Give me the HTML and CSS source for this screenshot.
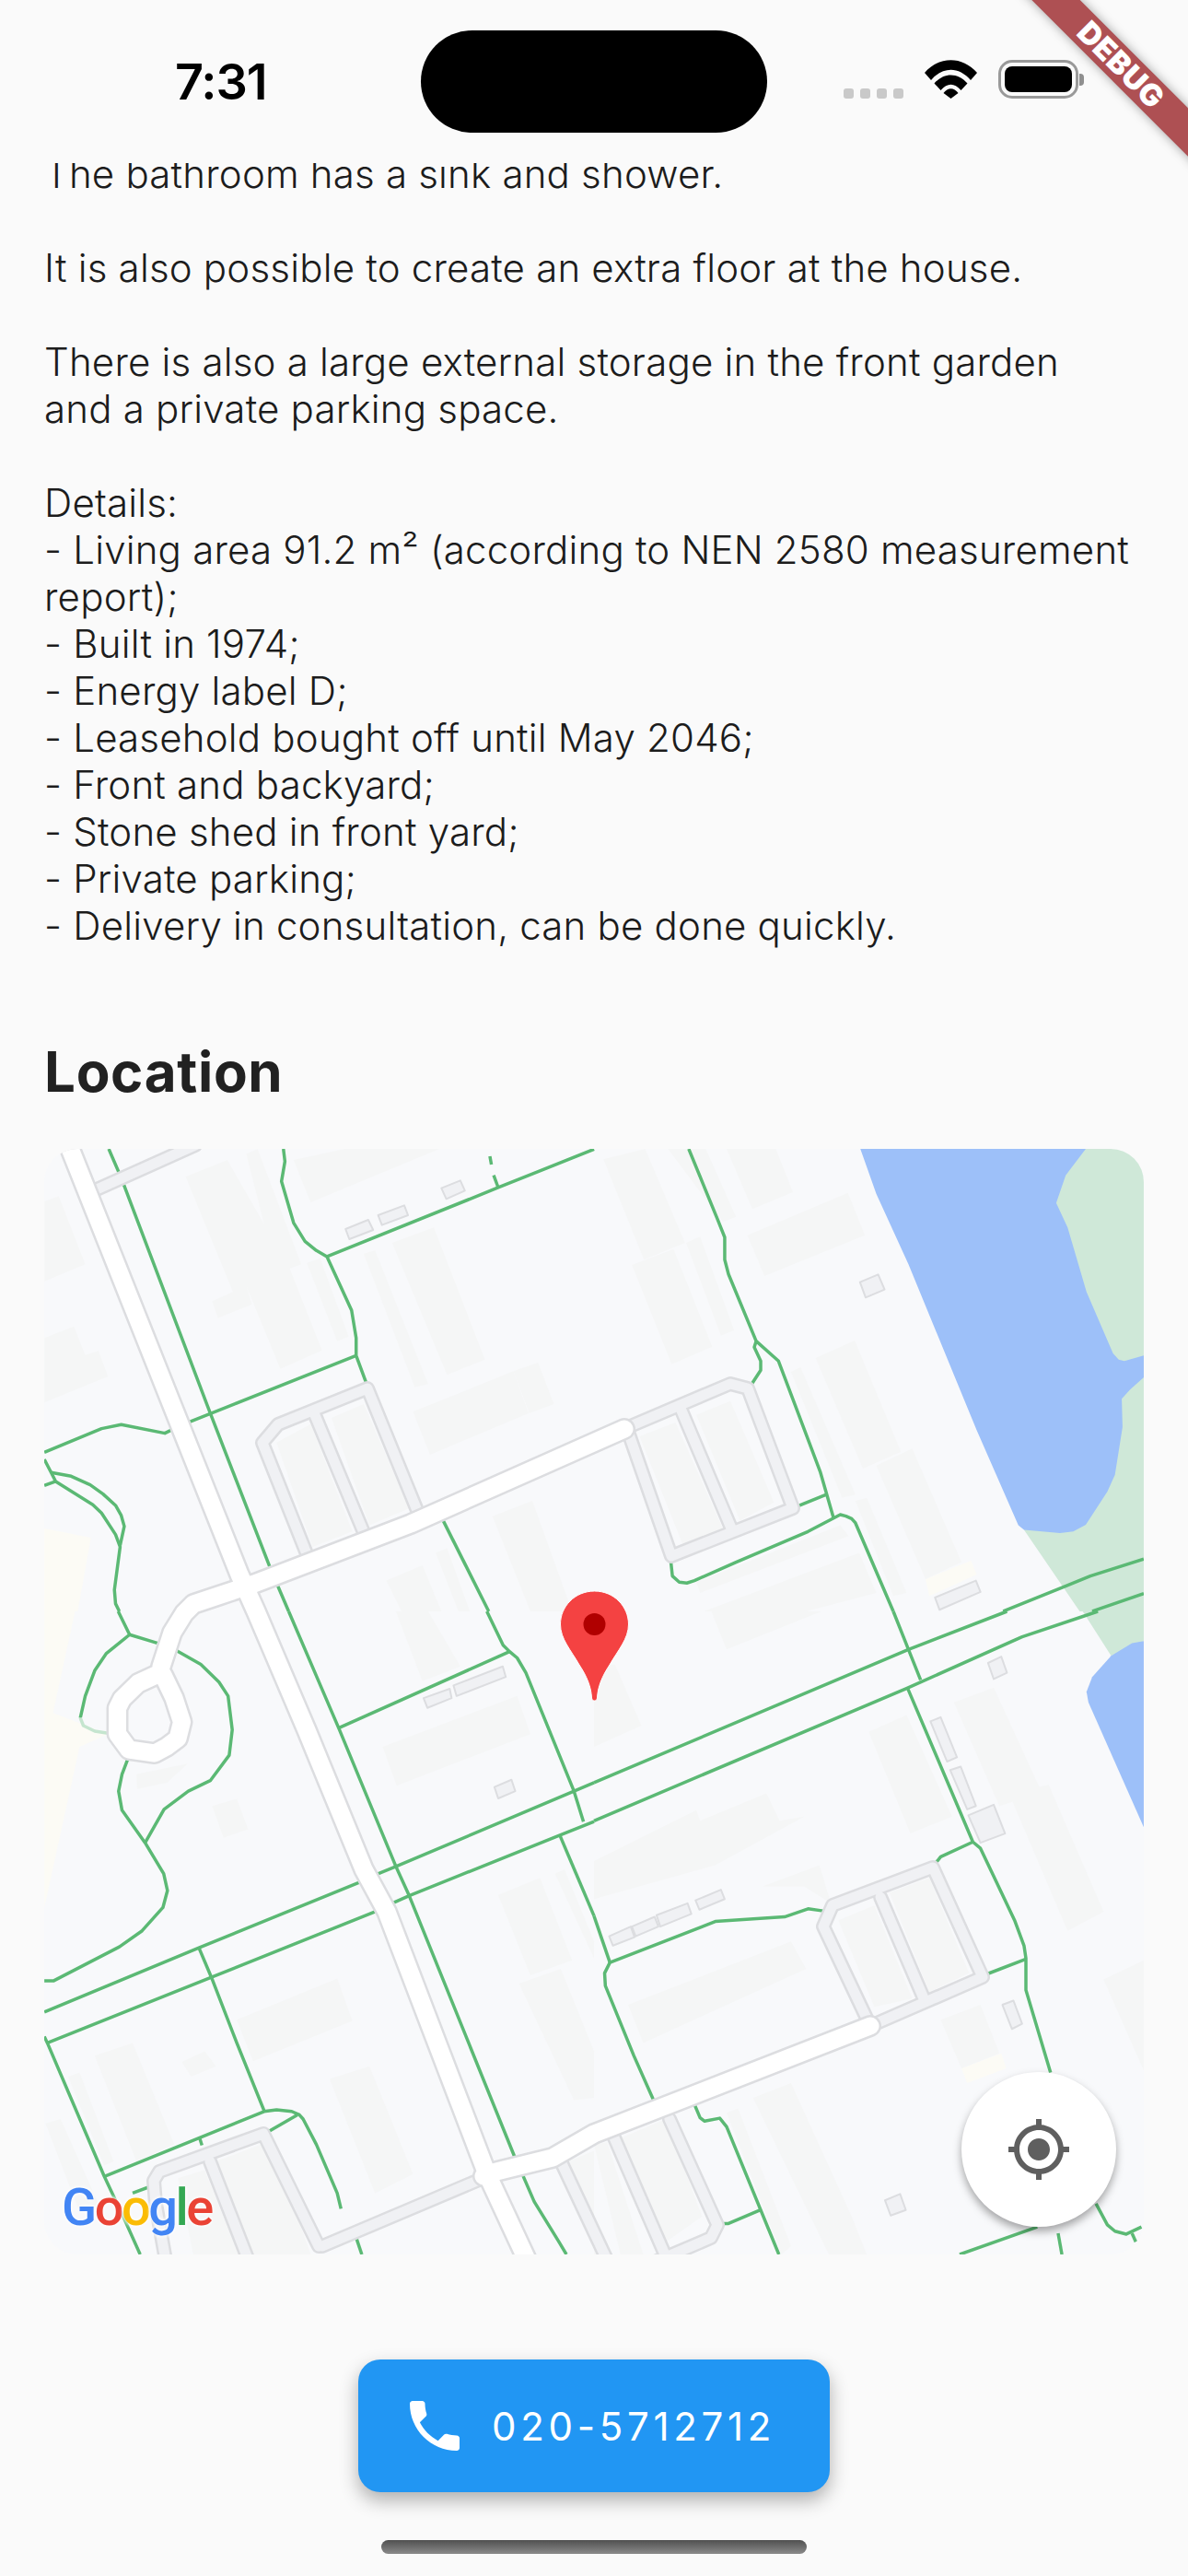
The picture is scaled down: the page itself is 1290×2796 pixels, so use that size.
FILE: index.html
```html
<!DOCTYPE html>
<html lang="en">

<head>
  <meta http-equiv="Content-Type" content="text/html;charset=UTF-8" />
  <meta name="viewport" content="width=device-width, initial-scale=1.0" />
  <title>House details</title>
  <link rel="stylesheet" href="styles.css">
</head>

<body>
  <div class="screen">
    <header class="status-bar">
      <span class="time">7:31</span>
      <div class="island"></div>
      <div class="status-icons">
        <div class="signal"><i></i><i></i><i></i><i></i></div>
        <svg class="wifi" viewBox="0 0 57 42">
          <path d="M0 14 C16 -4.500 41 -4.500 57 14 L50 22 C37 7 20 7 7 22 Z" />
          <path d="M10.500 25.500 C21 13.500 36 13.500 46.500 25.500 L39.500 33 C32 24.500 25 24.500 17.500 33 Z" />
          <path d="M20.500 36 C25 29.500 32 29.500 36.500 36 L28.500 42 Z" />
        </svg>
        <div class="battery"><div class="battery-level"></div></div>
        <div class="battery-nub"></div>
      </div>
    </header>

    <div class="debug-banner">DEBUG</div>

    <main class="content">
      <section class="description">
        <p>The bathroom has a sink and shower.</p>
        <p>It is also possible to create an extra floor at the house.</p>
        <p>There is also a large external storage in the front garden<br>and a private parking space.</p>
        <p>
          Details:<br>
          - Living area 91.2 m² (according to NEN 2580 measurement report);<br>
          - Built in 1974;<br>
          - Energy label D;<br>
          - Leasehold bought off until May 2046;<br>
          - Front and backyard;<br>
          - Stone shed in front yard;<br>
          - Private parking;<br>
          - Delivery in consultation, can be done quickly.
        </p>
      </section>

      <h2 class="section-title">Location</h2>

      <div class="map">
        <svg class="map-svg" viewBox="48 1248 1194 1200" width="1194" height="1200">
          <defs>
            <g id="main-roads">
              <path d="M73 1240 L260 1710 L278 1750 L333 1879 L395 2030 L420 2076 L529 2361 L575 2460" />
              <path d="M678 1552 L446 1655 L276 1720 L237 1733 L210 1742 L200 1752 L187 1773 L175 1810" />
              <path d="M169.500 1819 L150 1828 L132.500 1845 L127.500 1855 L127.500 1883 L140 1900 L168 1904 L181 1897 L193 1888 L197.500 1870 L189 1844 L177 1819 Z" />
              <path d="M945 2200 L645 2317 L600 2343 L539 2358 L525 2363" />
            </g>
            <g id="service-roads">
              <!-- top left stub -->
              <path d="M105 1292 L212 1244" />
              <!-- lot by the main road -->
              <path d="M332 1685 L285 1567 L302 1547 L399 1508 L452 1638" />
              <path d="M342 1537 L394 1662" />
              <!-- lot top right -->
              <path d="M682 1555 L729 1690 L861 1638 L812 1508 L793 1503 L682 1550" />
              <path d="M740 1532 L795 1662" />
              <!-- lot right -->
              <path d="M945 2200 L894 2092 L904 2069 L1013 2028 L1067 2147 L945 2200" />
              <path d="M956 2060 L1003 2170" />
              <!-- lots bottom -->
              <path d="M609 2347 L662 2460" />
              <path d="M666 2319 L725 2455" />
              <path d="M727 2301 L779 2416 L772 2430 L690 2465" />
              <path d="M181 2460 L169 2393 L167 2368 L173 2358 L286 2317 L346 2439" />
              <path d="M228 2347 L272 2460" />
              <path d="M350 2439 L525 2365" />
            </g>
          </defs>

          <rect class="map-land" x="48" y="1248" width="1194" height="1200" />

          <!-- top left quarter -->
          <g transform="translate(0 1230) scale(.4114 .3333)">
            <g class="tint">
              <polygon points="117,1290 240,1320 205,1560 117,1560" />
            </g>
            <g class="buildings">
              <polygon points="490,145 600,90 765,445 850,710 740,770 650,500 665,560 575,605 560,550 615,520" />
              <polygon points="650,70 680,55 795,430 730,460" />
              <polygon points="810,425 845,410 920,665 890,680" />
              <polygon points="775,90 910,54 1160,54 820,228" />
              <polygon points="117,225 155,208 225,430 117,485" />
              <polygon points="117,670 195,632 225,725 260,712 285,795 117,880" />
              <polygon points="1035,360 1145,310 1280,740 1180,790" />
              <polygon points="960,395 990,385 1130,820 1095,830" />
              <polygon points="1090,910 1355,778 1395,915 1135,1050" />
              <polygon points="1355,778 1420,750 1462,885 1397,915" />
              <polygon points="1300,1250 1405,1200 1510,1560 1400,1560" />
              <polygon points="1020,1460 1115,1410 1165,1560 1060,1560" />
              <polygon points="1150,1370 1180,1355 1240,1560 1210,1560" />
              <polygon points="730,1010 820,950 930,1300 825,1350" />
              <polygon points="875,930 960,885 1080,1225 975,1280" />
            </g>
            <g class="paths">
              <path d="M287 54 L317 140 M325 165 L555 915 L712 1415 M730 1468 L762 1560" />
              <path d="M748 54 L752 95 L743 160 L775 295 L805 355 L835 385 L863 405 L928 580 L940 670 L940 727 L967 817" />
              <path d="M1568 55 L1315 180 L863 405" />
              <path d="M1293 78 L1297 105 M1303 140 L1315 180" />
              <path d="M940 727 L497 945 M455 968 L435 980 L320 952 L268 965 L117 1042" />
              <path d="M117 1065 L135 1108 L147 1137 L245 1213 L268 1240 L305 1310 L317 1350 L302 1490 L305 1535 L315 1560" />
              <path d="M135 1108 L188 1120 L238 1148 L272 1178 L305 1215 L320 1248 L328 1283 L317 1345" />
              <path d="M117 1150 L147 1137" />
              <path d="M1165 1253 L1290 1560" />
            </g>
          </g>

          <!-- top right quarter -->
          <g transform="translate(645 1230) scale(.4114 .3333)">
            <g class="tint">
              <polygon points="875,1455 995,1395 1010,1440 885,1510" />
            </g>
            <g class="buildings">
              <polygon points="25,88 135,54 240,360 132,415" />
              <polygon points="100,432 210,380 312,698 205,755" />
              <polygon points="195,54 295,54 375,275 340,292" />
              <polygon points="350,54 480,54 525,195 418,250" />
              <polygon points="405,335 670,197 715,335 450,468" />
              <polygon points="243,360 280,340 370,645 335,662" />
              <polygon points="585,735 688,678 810,1040 710,1095" />
              <polygon points="520,780 545,765 690,1180 655,1190" />
              <polygon points="745,1085 840,1030 970,1400 875,1455" />
              <polygon points="690,1200 720,1190 825,1500 790,1510" />
              <polygon points="290,1560 700,1370 745,1500 560,1560" />
              <polygon points="270,1465 650,1280 672,1315 280,1500" />
              <polygon points="120,990 215,945 340,1290 235,1345" />
              <polygon points="270,920 360,875 475,1205 385,1265" />
            </g>
            <path class="park" d="M1280 54 H1451 V1560 H1282 L1135 1295 L1200 1000 L1200 200 Z" />
            <path class="water" d="M703 54 L745 200 L830 430 L920 700 L1010 970 L1120 1280 L1135 1295 L1230 1305 L1265 1300 L1298 1278 L1355 1170 L1375 1115 L1395 960 L1393 868 L1415 838 L1451 798 L1451 727 L1400 745 L1385 740 L1370 720 L1300 520 L1250 310 L1220 230 L1245 140 L1298 54 Z" />
            <g class="paths">
              <path d="M250 54 L325 280 L345 342 L345 415 L355 462 L428 680 L487 745 L597 1105 L632 1255" />
              <path d="M428 680 L423 700 L440 745 L440 775 L410 832" />
              <path d="M612 1180 L537 1218" />
              <path d="M203 1400 L207 1445 L225 1465 L245 1468 L265 1460 L375 1400 L565 1300 L650 1245 L665 1250 L680 1258 L690 1272 L790 1560" />
              <path d="M1080 1560 L1240 1480 L1310 1445 L1451 1390" />
              <path d="M1315 1560 L1451 1502" />
            </g>
          </g>

          <!-- bottom left quarter -->
          <g transform="translate(0 1750) scale(.4114 .4592)">
            <g class="tint">
              <polygon points="117,0 198,0 140,240 285,290 210,320 117,700" />
            </g>
            <g class="buildings">
              <polygon points="1010,320 1365,200 1400,290 1047,412" />
              <polygon points="560,460 625,443 655,515 590,535" />
              <polygon points="360,385 495,360 440,405 362,420" />
              <polygon points="625,965 890,868 930,968 668,1063" />
              <polygon points="250,1050 350,1020 460,1260 360,1300" />
              <polygon points="480,1065 540,1040 570,1075 505,1100" />
              <polygon points="870,1105 975,1075 1090,1330 990,1375" />
              <polygon points="180,1100 210,1090 300,1300 275,1310" />
              <polygon points="1315,670 1425,630 1510,825 1400,860" />
              <polygon points="1370,880 1480,845 1568,1040 1568,1150 1515,1155" />
              <polygon points="1465,620 1490,610 1568,780 1568,820" />
              <polygon points="1045,0 1130,0 1215,130 1115,165" />
              <polygon points="570,1300 690,1260 785,1430 820,1520 660,1520" />
              <polygon points="470,1340 540,1320 630,1520 510,1520" />
              <polygon points="1500,1300 1568,1275 1568,1520 1600,1520" />
              <polygon points="120,1210 160,1200 260,1400 210,1420" />
            </g>
            <g class="paths">
              <path d="M312 0 L342 55 L280 100 L250 140 L225 200 L212 252" />
              <path class="path-faint" d="M212 252 L220 270 L250 283 L285 288" />
              <path d="M342 55 L415 75" />
              <path d="M457 88 L530 125 L578 167 L602 200 L613 280 L605 340 L555 400 L497 425 L433 468 L383 547" />
              <path d="M337 350 L322 385 L313 425 L322 470 L383 547 L432 620 L442 660 L430 700 L375 755 L315 793 L142 873 L117 873" />
              <path d="M117 947 L525 795 L950 640 M990 623 L1045 603 L1515 425 L1568 405" />
              <path d="M125 1020 L558 865 L995 708 M1035 690 L1080 672 L1475 530 L1568 497" />
              <path d="M525 795 L558 865 L625 1020 L697 1180" />
              <path d="M117 1005 L125 1020 L275 1335 L330 1440 L370 1520" />
              <path d="M277 1335 L697 1182 L730 1178 L770 1182 L790 1190 L800 1200 L835 1260 L890 1375 L900 1412" />
              <path d="M708 1230 L785 1190" />
              <path d="M527 1245 L533 1262 M540 1275 L545 1282" />
              <path d="M350 1375 L395 1360" />
              <path d="M762 0 L895 278 L1045 603 L1080 672 L1360 1293 M1380 1333 L1410 1395 L1475 1490 L1495 1520" />
              <path d="M895 275 L1345 95" />
              <path d="M1285 0 L1328 80 L1345 95 L1365 110 L1388 145 L1515 425 L1540 497" />
              <path d="M1478 530 L1568 720" />
              <path d="M940 1480 L955 1520" />
            </g>
          </g>

          <!-- bottom right quarter -->
          <g transform="translate(645 1750) scale(.4114 .4592)">
            <g class="tint">
              <polygon points="970,1080 1075,1045 1088,1080 985,1115" />
            </g>
            <g class="buildings">
              <polygon points="0,590 270,470 280,495 455,430 490,495 555,485 320,600 0,680" />
              <polygon points="90,930 520,780 560,845 130,1020" />
              <polygon points="725,285 825,245 945,485 835,525" />
              <polygon points="950,215 1055,180 1175,415 1200,410 1345,710 1250,755 1105,450 1070,460" />
              <polygon points="915,965 1020,930 1070,1045 970,1080" />
              <polygon points="1345,870 1451,825 1451,1085" />
              <polygon points="420,1150 520,1115 680,1430 720,1520 620,1520" />
              <polygon points="350,1185 380,1175 520,1500 495,1520" />
              <polygon points="0,320 125,270 55,125 0,130" />
              <polygon points="310,0 600,0 350,90" />
              <polygon points="70,1245 190,1200 285,1430 190,1490" />
              <polygon points="0,1260 35,1255 130,1520 70,1520" />
              <polygon points="645,730 740,695 840,915 740,935" />
              <polygon points="780,665 885,630 990,855 885,900" />
              <polygon points="445,650 595,600 625,690 555,650" />
            </g>
            <path class="park" d="M1290 0 H1451 V70 L1365 105 Z" />
            <path class="water" d="M1451 70 L1420 75 L1365 105 L1315 155 L1300 190 L1305 215 L1451 510 Z" />
            <g class="paths">
              <path d="M790 0 L830 90 L862 162" />
              <path d="M0 405 L830 90 L1090 0" />
              <path d="M0 495 L825 182 L1130 60 L1330 0" />
              <path d="M828 182 L1000 545 L1020 560 L1110 730 L1135 790 L1140 820 L1140 895 L1205 1090" />
              <path d="M1140 822 L1035 858" />
              <path d="M1000 545 L915 580 L900 597" />
              <path d="M605 708 L565 703 L503 722 L320 733 L42 830 L28 855 L30 885 L105 1050 L158 1157" />
              <path d="M0 720 L42 830" />
              <path d="M265 1165 L280 1197 L292 1205 L332 1198 L350 1218 L488 1520" />
              <path d="M335 1447 L355 1447 L438 1415" />
              <path d="M1325 1400 L1355 1450 L1375 1465 L1405 1472 L1445 1455" />
              <path d="M1420 1470 L1430 1490" />
              <path d="M965 1520 L1170 1455" />
              <path d="M1225 1470 L1235 1520" />
            </g>
          </g>

          <use class="service-casing" href="#service-roads" />
          <use class="service-fill" href="#service-roads" />
          <use class="road-casing" href="#main-roads" />
          <use class="road-fill" href="#main-roads" />

          <g class="sheds" transform="translate(0 1230) scale(.4114 .3333)">
            <polygon points="912,315 972,285 985,318 922,348" />
            <polygon points="998,270 1067,238 1077,270 1008,302" />
            <polygon points="1165,182 1215,157 1227,190 1178,217" />
          </g>
          <g class="sheds" transform="translate(645 1230) scale(.4114 .3333)">
            <polygon points="702,488 750,463 767,512 717,538" />
            <polygon points="900,1515 1008,1460 1020,1497 912,1555" />
          </g>
          <g class="sheds" transform="translate(0 1750) scale(.4114 .4592)">
            <polygon points="1118,205 1187,183 1192,205 1128,228" />
            <polygon points="1197,175 1327,130 1335,155 1205,200" />
            <polygon points="1305,415 1350,398 1360,425 1315,442" />
          </g>
          <g class="sheds" transform="translate(645 1750) scale(.4114 .4592)">
            <polygon points="1040,122 1075,107 1090,145 1055,160" />
            <polygon points="888,260 915,250 958,345 932,355" />
            <polygon points="940,375 968,367 1008,460 985,468" />
            <polygon points="988,482 1055,457 1085,525 1020,547" />
            <polygon points="40,768 97,745 107,770 50,790" />
            <polygon points="100,745 160,722 170,745 110,768" />
            <polygon points="165,718 247,690 257,715 175,745" />
            <polygon points="268,683 335,658 345,680 278,705" />
            <polygon points="1078,930 1107,920 1130,975 1103,987" />
            <polygon points="768,1392 808,1377 823,1415 783,1428" />
          </g>

          <path class="pin" d="M645.500 1728 C624 1728 608.500 1745 608.500 1764 C608.500 1780 620 1792 629 1808 C637 1820 642 1832 642.500 1844 C643 1848 648 1848 648.500 1844 C649 1832 654 1820 662 1808 C671 1792 682.500 1780 682.500 1764 C682.500 1745 667 1728 645.500 1728 Z" />
          <circle class="pin-dot" cx="645.500" cy="1764" r="12" />
        </svg>

        <div class="google-logo"><span class="g-blue">G</span><span class="g-red">o</span><span class="g-yellow">o</span><span class="g-blue">g</span><span class="g-green">l</span><span class="g-red">e</span></div>

        <div class="locate-btn">
          <svg viewBox="0 0 24 24" width="72" height="72">
            <path d="M12 8c-2.210 0-4 1.790-4 4s1.790 4 4 4 4-1.790 4-4-1.790-4-4-4zm8.940 3c-.460-4.170-3.770-7.480-7.940-7.940V1h-2v2.060C6.830 3.520 3.520 6.830 3.060 11H1v2h2.060c.460 4.170 3.770 7.480 7.940 7.940V23h2v-2.060c4.170-.460 7.480-3.770 7.940-7.940H23v-2h-2.060zM12 19c-3.870 0-7-3.130-7-7s3.130-7 7-7 7 3.130 7 7-3.130 7-7 7z" />
          </svg>
        </div>
      </div>

      <div class="call-row">
        <button class="call-btn" type="button">
          <svg viewBox="0 0 24 24" width="72" height="72">
            <path d="M6.620 10.790c1.440 2.830 3.760 5.140 6.590 6.590l2.200-2.200c.270-.270.670-.360 1.020-.240 1.120.370 2.330.570 3.570.570.550 0 1 .450 1 1V20c0 .550-.450 1-1 1-9.390 0-17-7.610-17-17 0-.550.450-1 1-1h3.500c.550 0 1 .450 1 1 0 1.250.200 2.450.570 3.570.110.350.030.740-.250 1.020l-2.200 2.200z" />
          </svg>
          <span>020-5712712</span>
        </button>
      </div>
    </main>

    <div class="home-indicator"></div>
  </div>
</body>

</html>
```

FILE: styles.css
```css
* {
  box-sizing: border-box;
}

body {
  margin: 0;
  background-color: #fafafa;
  color: #212121;
  font-family: "Inter", "Liberation Sans", sans-serif;
}

.screen {
  position: relative;
  width: 1290px;
  height: 2796px;
  overflow: hidden;
  background-color: #fafafa;
}

/* Status bar */
.status-bar {
  position: relative;
  z-index: 2;
  height: 177px;
  background-color: #fafafa;
  display: flex;
  align-items: flex-start;
  padding-top: 33px;
}

.time {
  width: 457px;
  padding: 26px 0 0 190px;
  font-size: 54px;
  line-height: 60px;
  font-weight: 600;
  color: #000;
  letter-spacing: -1px;
}

.island {
  width: 376px;
  height: 111px;
  border-radius: 56px;
  background-color: #000;
}

.status-icons {
  display: flex;
  align-items: flex-end;
  margin: 32px 0 0 83px;
  height: 42px;
}

.signal {
  display: flex;
  gap: 7px;
  margin-right: 23px;
}

.signal i {
  display: block;
  width: 11px;
  height: 11px;
  border-radius: 3px;
  background-color: #c9c9c9;
}

.wifi {
  width: 57px;
  height: 42px;
  margin-right: 23px;
  fill: #000;
}

.battery {
  width: 87px;
  height: 42px;
  padding: 4px;
  border: 3px solid #999;
  border-radius: 15px;
}

.battery-level {
  width: 100%;
  height: 100%;
  border-radius: 8px;
  background-color: #000;
}

.battery-nub {
  align-self: center;
  width: 5px;
  height: 13px;
  margin-left: 1px;
  border-radius: 0 4px 4px 0;
  background-color: #8f8f8f;
}

.debug-banner {
  position: absolute;
  z-index: 3;
  left: 967px;
  top: 52px;
  width: 500px;
  height: 37px;
  transform: rotate(45deg);
  background-color: #ae5053;
  box-shadow: 0 0 12px rgba(0, 0, 0, 0.35);
  color: #fff;
  text-align: center;
  font-size: 33px;
  line-height: 37px;
  font-weight: 900;
  letter-spacing: 0.5px;
}

/* Content */
.content {
  padding: 0 48px;
}

.description {
  margin-top: -14px;
  font-size: 42px;
  line-height: 51px;
  font-weight: 300;
  color: #1c1c1c;
  letter-spacing: 0.2px;
}

.description p {
  margin: 0 0 51px;
}

.section-title {
  margin: 0;
  padding-top: 46px;
  font-size: 60px;
  line-height: 72px;
  font-weight: 700;
  letter-spacing: 0.7px;
}

/* Map */
.map {
  position: relative;
  width: 1194px;
  height: 1200px;
  margin-top: 48px;
  border-radius: 36px;
  overflow: hidden;
  background-color: #f8f9fb;
}

.map-svg {
  display: block;
}

.map-svg * {
  vector-effect: non-scaling-stroke;
}

.map-land {
  fill: #f8f9fb;
}

.tint {
  fill: #fcfbf5;
}

.buildings {
  fill: #f5f6f6;
}

.park {
  fill: #cfe8d8;
}

.water {
  fill: #9dc0f9;
}

.paths path {
  fill: none;
  stroke: #5bb974;
  stroke-width: 3.5px;
  stroke-linejoin: round;
}

.paths .path-faint {
  stroke: #c5e5cf;
}

.service-casing,
.service-fill,
.road-casing,
.road-fill {
  fill: none;
  stroke-linejoin: round;
  stroke-linecap: round;
}

.service-casing {
  stroke: #dcdde0;
  stroke-width: 16px;
}

.service-fill {
  stroke: #f0f1f4;
  stroke-width: 11px;
}

.road-casing {
  stroke: #dcdde0;
  stroke-width: 24px;
}

.road-fill {
  stroke: #fff;
  stroke-width: 19px;
}

.sheds {
  fill: #f0f1f4;
  stroke: #dcdde0;
  stroke-width: 2px;
  stroke-linejoin: round;
}

.pin {
  fill: #f44242;
  stroke: #fff;
  stroke-width: 1px;
}

.pin-dot {
  fill: #b00000;
}

.google-logo {
  position: absolute;
  left: 19px;
  top: 1116px;
  font-family: "Roboto", "Liberation Sans", sans-serif;
  font-size: 56px;
  line-height: 66px;
  letter-spacing: -2.5px;
  font-weight: 500;
  text-shadow: 0 0 4px #fff, 0 0 4px #fff;
}

.g-blue {
  color: #4285f4;
}

.g-red {
  color: #ea4335;
}

.g-yellow {
  color: #fbbc05;
}

.g-green {
  color: #34a853;
}

.locate-btn {
  position: absolute;
  left: 996px;
  top: 1002px;
  width: 168px;
  height: 168px;
  border-radius: 50%;
  background-color: #fff;
  box-shadow: 0 5px 10px rgba(0, 0, 0, 0.35);
  display: flex;
  align-items: center;
  justify-content: center;
  fill: #5f5f5f;
}

/* Call button */
.call-row {
  display: flex;
  justify-content: center;
  margin-top: 114px;
}

.call-btn {
  display: flex;
  align-items: center;
  gap: 26px;
  width: 512px;
  height: 144px;
  padding: 0 0 0 47px;
  border: none;
  border-radius: 24px;
  background-color: #2196f3;
  box-shadow: 0 9px 20px rgba(0, 0, 0, 0.3);
  color: #fff;
  fill: #fff;
  font-family: "Inter", "Liberation Sans", sans-serif;
  font-size: 42px;
  font-weight: 400;
  letter-spacing: 4.7px;
}

.home-indicator {
  position: absolute;
  left: 414px;
  top: 2757px;
  width: 462px;
  height: 15px;
  border-radius: 8px;
  background: linear-gradient(#505050, #8a8a8a);
}
```
